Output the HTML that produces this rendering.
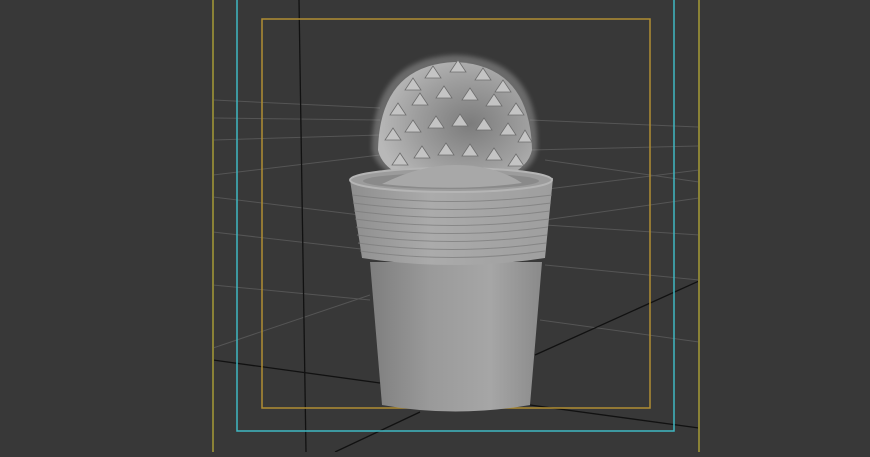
<!DOCTYPE html>
<html><head><style>html,body{margin:0;padding:0;background:#383838;overflow:hidden}</style></head>
<body>
<svg width="870" height="452" viewBox="0 0 870 452" xmlns="http://www.w3.org/2000/svg">
<defs>
<linearGradient id="body" x1="0" x2="1" y1="0" y2="0">
<stop offset="0" stop-color="#7e7e7e"/><stop offset="0.35" stop-color="#9a9a9a"/><stop offset="0.7" stop-color="#a6a6a6"/><stop offset="1" stop-color="#8a8a8a"/>
</linearGradient>
<linearGradient id="band" x1="0" x2="1" y1="0" y2="0">
<stop offset="0" stop-color="#8e8e8e"/><stop offset="0.4" stop-color="#ababab"/><stop offset="1" stop-color="#9e9e9e"/>
</linearGradient>
<radialGradient id="cac" cx="0.6" cy="0.5" r="0.6">
<stop offset="0" stop-color="#7c7c7c"/><stop offset="0.6" stop-color="#9e9e9e"/><stop offset="1" stop-color="#b8b8b8"/>
</radialGradient>
<filter id="blur"><feGaussianBlur stdDeviation="2.5"/></filter>
<clipPath id="vp"><rect x="214" y="0" width="484" height="452"/></clipPath>
</defs>
<rect width="870" height="452" fill="#383838"/>
<g clip-path="url(#vp)">
<g stroke="#555" stroke-width="1" fill="none">
<path d="M213 100 L380 108"/><path d="M213 118 L380 120"/><path d="M213 140 L380 135"/>
<path d="M213 175 L380 155"/><path d="M213 197 L360 215"/><path d="M213 232 L370 250"/>
<path d="M213 285 L370 300"/><path d="M213 348 L370 295"/>
<path d="M530 120 L699 127"/><path d="M530 150 L699 146"/><path d="M540 190 L699 170"/>
<path d="M545 220 L699 198"/><path d="M545 160 L699 182"/><path d="M545 225 L699 235"/><path d="M545 265 L699 280"/><path d="M540 320 L699 342"/>
</g>
<g stroke="#111" stroke-width="1.3" fill="none">
<path d="M299 0 L306 452"/>
<path d="M213 360 L380 383"/>
<path d="M530 405 L699 428"/>
<path d="M535 355 L699 281"/>
<path d="M335 452 L420 412"/>
</g>
<g fill="none" stroke-width="1.5">
<path d="M237 0 V431 H674 V0" stroke="#3fb7c2"/>
<rect x="262" y="19" width="388" height="389" stroke="#b08d32"/>
</g>
</g>
<path d="M213 0 V452 M699 0 V452" stroke="#a69a35" stroke-width="1.5" fill="none"/>
<!-- cactus -->
<path d="M372 150 Q372 58 455 55 Q540 58 537 150 Q530 185 455 188 Q380 185 372 150Z" fill="#c8c8c8" opacity="0.35" filter="url(#blur)"/>
<path d="M378 150 Q380 65 455 62 Q530 65 532 150 Q525 182 455 186 Q385 182 378 150Z" fill="url(#cac)"/>
<g fill="#c4c4c4" stroke="#6e6e6e" stroke-width="0.8">
<path d="M405 90 l8 -12 l8 12 z M425 78 l8 -12 l8 12 z M450 72 l8 -12 l8 12 z M475 80 l8 -12 l8 12 z M495 92 l8 -12 l8 12 z
M390 115 l8 -12 l8 12 z M412 105 l8 -12 l8 12 z M436 98 l8 -12 l8 12 z M462 100 l8 -12 l8 12 z M486 106 l8 -12 l8 12 z M508 115 l8 -12 l8 12 z
M385 140 l8 -12 l8 12 z M405 132 l8 -12 l8 12 z M428 128 l8 -12 l8 12 z M452 126 l8 -12 l8 12 z M476 130 l8 -12 l8 12 z M500 135 l8 -12 l8 12 z M518 142 l7 -12 l7 12 z
M392 165 l8 -12 l8 12 z M414 158 l8 -12 l8 12 z M438 155 l8 -12 l8 12 z M462 156 l8 -12 l8 12 z M486 160 l8 -12 l8 12 z M508 166 l8 -12 l8 12 z"/>
</g>
<path d="M370 262 L542 262 L530 405 Q455 418 382 405 Z" fill="url(#body)"/>
<path d="M350 180 Q450 165 553 178 L545 258 Q455 272 362 258 Z" fill="url(#band)"/>
<g stroke="#7a7a7a" stroke-width="1" fill="none" opacity="0.7">
<path d="M352 195 Q452 208 552 195"/><path d="M353 203 Q452 216 551 203"/><path d="M354 211 Q452 224 550 211"/>
<path d="M355 219 Q452 232 549 219"/><path d="M356 227 Q452 240 548 227"/><path d="M357 235 Q452 248 547 235"/>
<path d="M358 243 Q452 256 546 243"/><path d="M360 251 Q452 264 545 251"/>
</g>
<ellipse cx="451" cy="180" rx="101" ry="12" fill="#9c9c9c" stroke="#b5b5b5" stroke-width="2"/>
<ellipse cx="451" cy="181" rx="88" ry="8" fill="#8a8a8a"/>
<path d="M382 184 Q420 165 455 165 Q495 165 522 183 Q455 192 382 184Z" fill="#a8a8a8"/>
</svg>
</body></html>
